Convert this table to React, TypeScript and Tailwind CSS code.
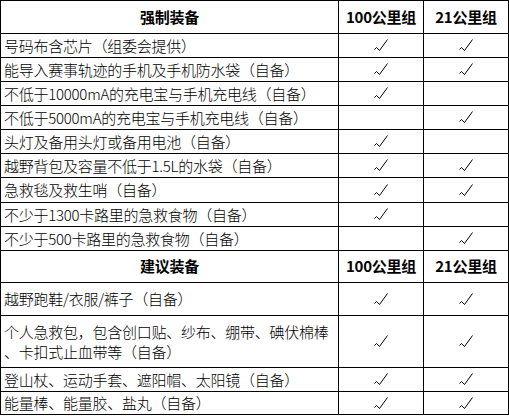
import React from 'react';

type Row = { label: React.ReactNode; a: boolean; b: boolean; h: string };

const required: Row[] = [
  { label: "号码布含芯片（组委会提供）", a: true, b: true, h: "h-[23px]" },
  { label: "能导入赛事轨迹的手机及手机防水袋（自备）", a: true, b: true, h: "h-[23px]" },
  { label: "不低于10000mA的充电宝与手机充电线（自备）", a: true, b: false, h: "h-[23px]" },
  { label: "不低于5000mA的充电宝与手机充电线（自备）", a: false, b: true, h: "h-[23px]" },
  { label: "头灯及备用头灯或备用电池（自备）", a: true, b: false, h: "h-[23px]" },
  { label: "越野背包及容量不低于1.5L的水袋（自备）", a: true, b: true, h: "h-[23px]" },
  { label: "急救毯及救生哨（自备）", a: true, b: true, h: "h-[24px]" },
  { label: "不少于1300卡路里的急救食物（自备）", a: true, b: false, h: "h-[23px]" },
  { label: "不少于500卡路里的急救食物（自备）", a: false, b: true, h: "h-[23px]" },
];

const suggested: Row[] = [
  { label: "越野跑鞋/衣服/裤子（自备）", a: true, b: true, h: "h-[32px]" },
  {
    label: (
      <>
        个人急救包，包含创口贴、纱布、绷带、碘伏棉棒
        <br />
        、卡扣式止血带等（自备）
      </>
    ),
    a: true,
    b: true,
    h: "h-[51px]",
  },
  { label: "登山杖、运动手套、遮阳帽、太阳镜（自备）", a: true, b: true, h: "h-[23px]" },
  { label: "能量棒、能量胶、盐丸（自备）", a: true, b: true, h: "h-[22px]" },
];

function Check() {
  return (
    <svg width="14" height="13" viewBox="0 0 14 13" fill="none">
      <path d="M0.5 10.5 L2.5 8.5 L5.5 11.5 L13.5 0.5" stroke="#000" strokeWidth="1" />
    </svg>
  );
}

function Header({ title, h }: { title: string; h: string }) {
  return (
    <>
      <div className={`${h} bg-white flex items-center justify-center font-bold`}>{title}</div>
      <div className={`${h} bg-white flex items-center justify-center font-bold`}>100公里组</div>
      <div className={`${h} bg-white flex items-center justify-center font-bold`}>21公里组</div>
    </>
  );
}

function Rows({ rows }: { rows: Row[] }) {
  return (
    <>
      {rows.map((r, i) => (
        <React.Fragment key={i}>
          <div className={`${r.h} bg-white flex items-center pl-[3px] leading-[20px] font-light`}>
            <span>{r.label}</span>
          </div>
          <div className={`${r.h} bg-white flex items-center justify-center`}>{r.a && <Check />}</div>
          <div className={`${r.h} bg-white flex items-center justify-center`}>{r.b && <Check />}</div>
        </React.Fragment>
      ))}
    </>
  );
}

export default function App() {
  return (
    <div className="w-[509px] h-[416px] bg-white">
      <div
        className="grid grid-cols-[337px_84px_84px] gap-px bg-black p-px w-[509px] text-[15px] text-black tracking-[-0.25px]"
        style={{ fontFamily: '"Noto Sans CJK SC", "Noto Sans", sans-serif' }}
      >
        <Header title="强制装备" h="h-[32px]" />
        <Rows rows={required} />
        <Header title="建议装备" h="h-[31px]" />
        <Rows rows={suggested} />
      </div>
    </div>
  );
}
